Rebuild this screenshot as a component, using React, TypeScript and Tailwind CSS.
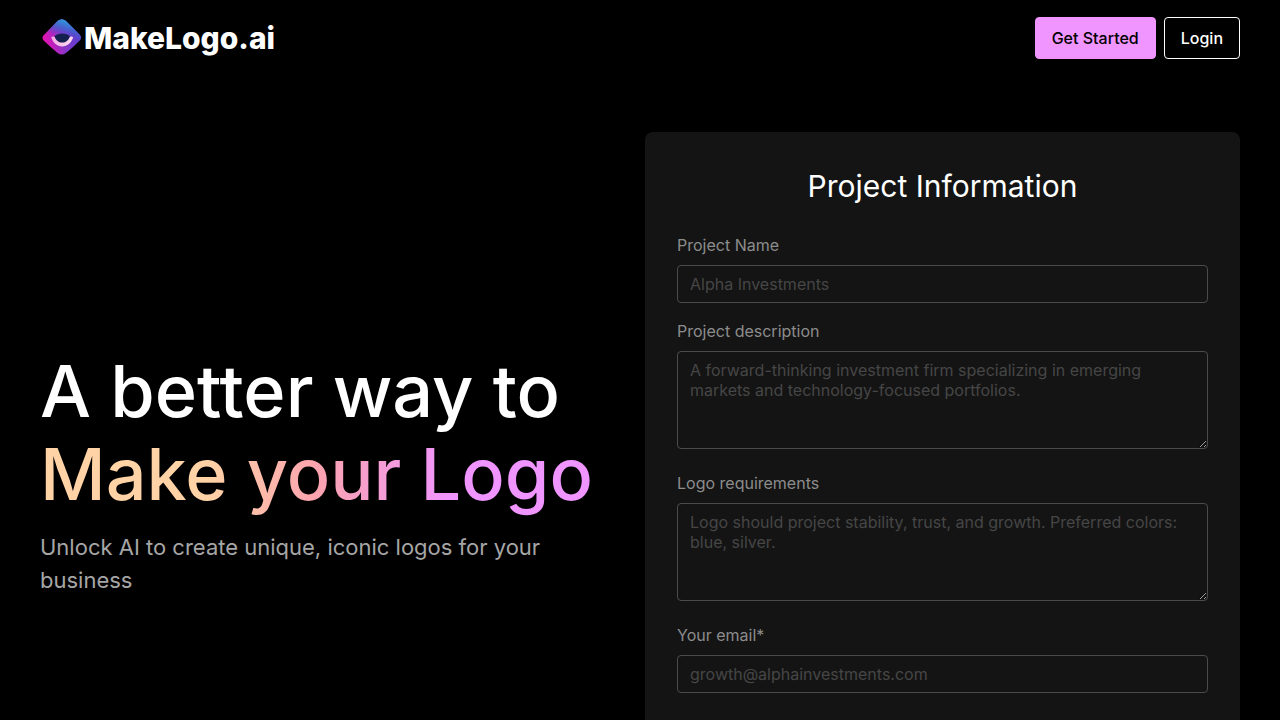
import type { ReactNode } from "react";

interface FieldProps {
  id: string;
  label: string;
  children: ReactNode;
}

function LogoMark() {
  return (
    <svg
      xmlns="http://www.w3.org/2000/svg"
      width="40"
      height="38"
      viewBox="0 0 40 38"
      fill="none"
      aria-hidden="true"
    >
      <defs>
        <linearGradient id="mark-base" x1="3" y1="24" x2="38" y2="16" gradientUnits="userSpaceOnUse">
          <stop stopColor="#e312b4" />
          <stop offset="0.5" stopColor="#8a35c8" />
          <stop offset="1" stopColor="#5a3fd0" />
        </linearGradient>
        <linearGradient id="mark-top" x1="22" y1="0" x2="17" y2="18" gradientUnits="userSpaceOnUse">
          <stop stopColor="#2a9fdc" />
          <stop offset="0.5" stopColor="#3c68cc" stopOpacity="0.8" />
          <stop offset="1" stopColor="#5a3fd0" stopOpacity="0" />
        </linearGradient>
        <linearGradient id="mark-smile" x1="10" y1="18" x2="30" y2="26" gradientUnits="userSpaceOnUse">
          <stop stopColor="#f7a8e4" />
          <stop offset="1" stopColor="#fbdcf0" />
        </linearGradient>
      </defs>
      <path
        d="M15.8 1.8Q19.8 -1.2 23.8 1.8Q30.4 8.4 37.8 15.8Q40.4 18.8 37.8 21.4Q31 28.4 24 34Q19.8 37 15.6 34Q8.6 28.2 1.4 21.2Q-0.4 18.8 1.4 16.4Q8.8 9 15.8 1.8Z"
        fill="url(#mark-base)"
      />
      <path
        d="M15.8 1.8Q19.8 -1.2 23.8 1.8Q30.4 8.4 37.8 15.8Q40.4 18.8 37.8 21.4L1.4 21.2Q-0.4 18.8 1.4 16.4Q8.8 9 15.8 1.8Z"
        fill="url(#mark-top)"
      />
      <path
        d="M9.2 18.2C11 17 12.6 17.4 13.8 19.2C15.4 21.8 17.4 23 20.3 23C23.2 23 25.2 21.8 26.8 19.2C27.8 17.4 29.4 17 31.2 18.2C29.2 24.2 25.2 27.4 20.2 27.4C15.2 27.4 11.2 24.2 9.2 18.2Z"
        fill="url(#mark-smile)"
      />
      <path
        d="M12.6 17C16 13.6 24.4 13.6 27.8 17C27 21 24 23.6 20.2 23.6C16.4 23.6 13.4 21 12.6 17Z"
        fill="#14204e"
      />
    </svg>
  );
}

function Field({ id, label, children }: FieldProps) {
  return (
    <div className="flex flex-col gap-2">
      <label htmlFor={id} className="leading-6 text-[#8c8c8c]">
        {label}
      </label>
      {children}
    </div>
  );
}

const control =
  "block w-full rounded border border-[#4b4b4b] bg-transparent px-3 py-2 leading-5 text-white placeholder:text-[#464646] outline-none focus:border-[#f094ff]";

export default function App() {
  return (
    <div className="min-h-screen bg-black px-10 font-['Inter',sans-serif] text-base text-white">
      <header className="flex h-[76px] items-center justify-between">
        <a href="#" className="flex items-center gap-0.5 pl-0.5">
          <LogoMark />
          <span className="text-[30px] leading-10 font-extrabold">MakeLogo.ai</span>
        </a>
        <nav className="flex gap-2">
          <button className="rounded border border-[#f094ff] bg-[#f094ff] px-4 py-2 font-medium text-black">
            Get Started
          </button>
          <button className="rounded border border-white px-4 py-2 font-medium">Login</button>
        </nav>
      </header>

      <main className="grid grid-cols-2 items-center gap-2.5 pt-14 pb-14">
        <section className="flex flex-col gap-4">
          <h1 className="text-[72px] leading-[83px] font-medium">
            A better way to
            <br />
            <span className="bg-linear-to-r from-[#ffd3a5] from-30% via-[#fba3ae] via-50% to-[#f094ff] to-75% bg-clip-text text-transparent">
              Make your Logo
            </span>
          </h1>
          <p className="text-[22px] leading-[33px] text-[#a6a6a6]">
            Unlock AI to create unique, iconic logos for your business
          </p>
        </section>

        <form className="rounded-lg bg-[#141414] px-8 pt-8 pb-[120px]">
          <h2 className="mb-6 text-center text-[30px] leading-[45px]">Project Information</h2>
          <div className="mb-4">
            <Field id="name" label="Project Name">
              <input id="name" type="text" placeholder="Alpha Investments" className={control} />
            </Field>
          </div>
          <div className="flex flex-col gap-[22px]">
            <Field id="description" label="Project description">
              <textarea
                id="description"
                rows={4}
                placeholder="A forward-thinking investment firm specializing in emerging markets and technology-focused portfolios."
                className={control}
              />
            </Field>
            <Field id="requirements" label="Logo requirements">
              <textarea
                id="requirements"
                rows={4}
                placeholder="Logo should project stability, trust, and growth. Preferred colors: blue, silver."
                className={control}
              />
            </Field>
            <Field id="email" label="Your email*">
              <input
                id="email"
                type="email"
                placeholder="growth@alphainvestments.com"
                className={control}
              />
            </Field>
          </div>
        </form>
      </main>
    </div>
  );
}
